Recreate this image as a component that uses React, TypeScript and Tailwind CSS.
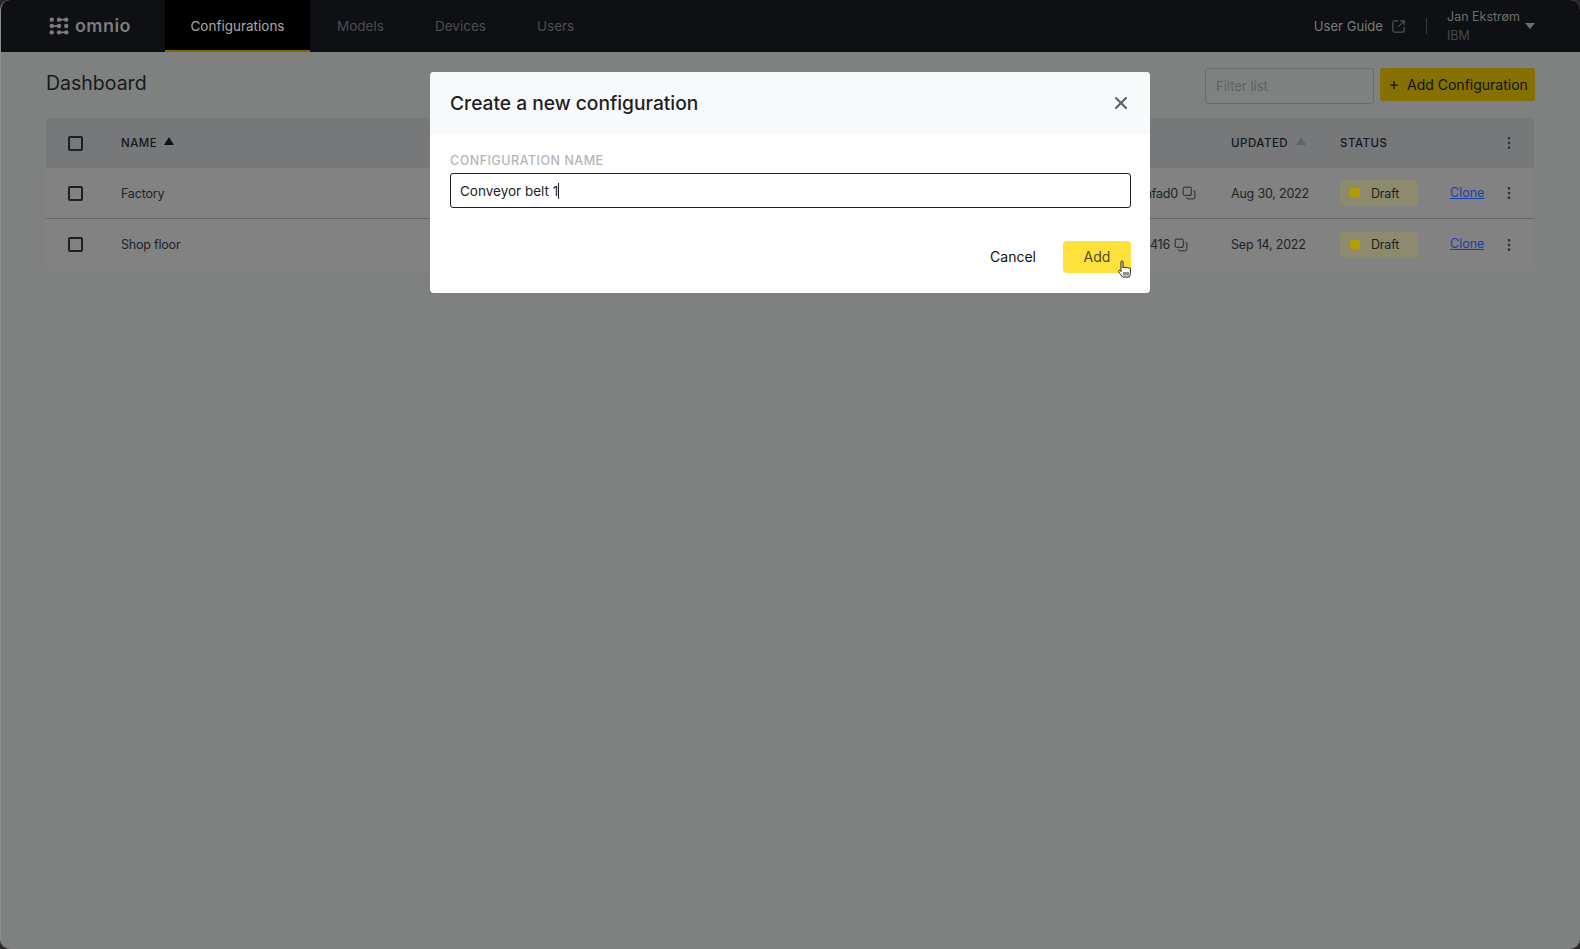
import { Plus, SquareArrowOutUpRight, X, EllipsisVertical, Copy } from 'lucide-react'

const FONT = "font-['Inter','Liberation_Sans',sans-serif]"

function Logo() {
  const ys = [4, 11, 18]
  return (
    <svg width="20" height="20" viewBox="0 0 22 22" fill="#7c7c7c">
      {ys.map((y) => (
        <g key={y}>
          <circle cx="3" cy={y} r="2.4" />
          <circle cx="11" cy={y} r="2.4" />
          <circle cx="19" cy={y} r="2.4" />
          <rect x={y === 11 ? 3 : 11} y={y - 1} width="8" height="2" />
        </g>
      ))}
    </svg>
  )
}

function Caret({ dim }: { dim?: boolean }) {
  return <span className={`inline-block w-0 h-0 border-x-[5px] border-x-transparent border-b-[8px] ${dim ? 'border-b-[#606266]' : 'border-b-[#10121a]'}`}></span>
}

function Checkbox() {
  return <span className="block w-[15px] h-[15px] rounded-[2px] border-2 border-[#1d1f24]"></span>
}

function Row({ name, hash, hashPad, textPad, date, last }: { name: string; hash: string; hashPad: string; textPad: string; date: string; last?: boolean }) {
  return (
    <div className={`flex items-center h-[51px] bg-[#828282] text-[12.5px] tracking-[-0.2px] text-[#202226] ${last ? '' : 'border-b border-[#646566]'}`}>
      <div className="w-[75px] pl-[22px]"><Checkbox /></div>
      <div className={`w-[300px] ${textPad}`}>{name}</div>
      <div className={`flex-1 flex items-center justify-end gap-1 ${hashPad}`}>
        <span className={textPad}>{hash}</span>
        <Copy className="w-[14px] h-[14px] -scale-100 text-[#222428]" strokeWidth={1.6} />
      </div>
      <div className={`w-[109px] ${textPad}`}>{date}</div>
      <div className="w-[110px]">
        <span className="flex items-center w-[78px] h-[26px] pl-[10px] gap-[11px] rounded-[4px] bg-[#8d8a6d] text-[#1d1f24]">
          <span className="w-[10px] h-[10px] rounded-[2px] bg-[#b39c00]"></span>
          <span className={textPad}>Draft</span>
        </span>
      </div>
      <a className="w-[35px] text-[12.5px] tracking-normal text-[#1d3fa8] underline">Clone</a>
      <div className="w-[49px] flex justify-center pr-[2px]">
        <EllipsisVertical className="w-4 h-4 text-[#2f3135]" strokeWidth={2} />
      </div>
    </div>
  )
}

export default function App() {
  return (
    <div className={`relative h-screen overflow-hidden bg-[#2a2a2a] text-[#1d1f24] ${FONT}`}>
      <div className="h-full rounded-[10px] overflow-hidden bg-[#7e817f] border-l border-[#8c8e8d]">
        {/* top nav */}
        <header className="flex items-center h-[52px] bg-[#0e1014]">
          <div className="flex items-center gap-[6px] w-[164px] pl-[48px]">
            <Logo />
            <span className="text-[18px] font-semibold tracking-[0.4px] text-[#7c7c7c] leading-none pb-[1px]">omnio</span>
          </div>
          <nav className="flex h-full text-[13.5px] text-[#4c4d50]">
            <div className="flex items-center w-[145px] justify-center pt-[2px] bg-black border-b-2 border-[#7f6c00] text-[#a9a9a9]">Configurations</div>
            <div className="flex items-center pl-[27px] pt-[1px] w-[98px]">Models</div>
            <div className="flex items-center pl-[27px] pt-[1px] w-[101px]">Devices</div>
            <div className="flex items-center pl-[28px] pt-[1px]">Users</div>
          </nav>
          <div className="ml-auto flex items-center pr-[45px]">
            <span className="text-[13.1px] pt-[2px] text-[#7a7b7d]">User Guide</span>
            <SquareArrowOutUpRight className="ml-[8px] w-[15px] h-[15px] text-[#66676a]" strokeWidth={1.5} />
            <span className="w-px h-[16px] bg-[#3a3b3e] mx-[20px]"></span>
            <div className="w-[78px] text-[12.5px] leading-[19px] text-[#6d6e71]">
              <div>Jan Ekstrøm</div>
              <div className="text-[#46474a]">IBM</div>
            </div>
            <span className="w-0 h-0 border-x-[5px] border-x-transparent border-t-[6px] border-t-[#6d6e71]"></span>
          </div>
        </header>

        <main className="px-[45px]">
          <div className="flex items-start h-[66px] pt-[16px]">
            <h1 className="text-[19.5px] leading-[30px] text-[#17191d]">Dashboard</h1>
            <div className="ml-auto flex gap-[6px]">
              <div className="flex items-center w-[169px] h-[36px] pl-[10px] pt-[2px] rounded-[3px] border border-[#6b6d6d] text-[13px] text-[#606263]">Filter list</div>
              <button className="flex items-center gap-[7px] w-[155px] h-[33px] pl-[8px] rounded-[3px] bg-[#857000] text-[14px] text-[#0f1013]">
                <Plus className="w-[12px] h-[12px]" strokeWidth={2.5} />
                Add Configuration
              </button>
            </div>
          </div>

          <div className="mr-[1px] rounded-[3px] overflow-hidden">
            <div className="flex items-center h-[50px] bg-[#76787a] text-[11.5px] font-medium tracking-[0.5px] text-[#15171b]">
              <div className="w-[75px] pl-[22px]"><Checkbox /></div>
              <div className="flex items-center gap-[7px]"><span className="pt-[1px]">NAME</span> <span className="pb-[5px] flex"><Caret /></span></div>
              <div className="ml-auto w-[109px] flex items-center gap-[8px]"><span className="pt-[1px]">UPDATED</span> <span className="pb-[5px] flex"><Caret dim /></span></div>
              <div className="w-[145px] pt-[1px]">STATUS</div>
              <div className="w-[49px] flex justify-center pr-[2px]">
                <EllipsisVertical className="w-4 h-4 text-[#2f3135]" strokeWidth={2} />
              </div>
            </div>
            <Row name="Factory" hash="cafad0" hashPad="pr-[35px]" textPad="pt-[2px]" date="Aug 30, 2022" />
            <Row name="Shop floor" hash="416" hashPad="pr-[43px]" textPad="pt-[1px]" date="Sep 14, 2022" last />
          </div>
        </main>
      </div>

      {/* modal */}
      <div className="absolute left-[430px] top-[72px] w-[720px] h-[221px] rounded-[4px] overflow-hidden bg-white">
        <div className="flex items-center justify-between h-[62px] pl-[20px] pr-[19px] bg-[#f8f9fb]">
          <h2 className="text-[19.2px] font-medium text-[#1d1f24]">Create a new configuration</h2>
          <X className="w-5 h-5 -mt-[1px] text-[#5f6165]" strokeWidth={2.5} />
        </div>
        <div className="pl-[20px] pr-[19px] pt-[19px]">
          <label className="block text-[12.5px] leading-[16px] font-medium tracking-[0.5px] text-[#b4b5b7]">CONFIGURATION NAME</label>
          <div className="flex items-center h-[35px] mt-[4px] pl-[9px] rounded-[3px] border border-[#1d1f24] text-[13.5px] text-[#1d1f24]">
            <span className="pt-[1px]">Conveyor belt 1</span><span className="w-px h-[16px] bg-[#1d1f24]"></span>
          </div>
          <div className="flex items-center justify-end gap-[27px] mt-[33px]">
            <span className="text-[14px] text-[#111216] pb-[1px]">Cancel</span>
            <button className="w-[68px] h-[32px] pb-[1px] rounded-[4px] bg-[#ffe13c] text-[14px] text-[#4b4a2e]">Add</button>
          </div>
        </div>
      </div>

      {/* mouse pointer */}
      <svg className="absolute left-[1117px] top-[260px]" width="16" height="19" viewBox="0 0 15 19" fill="white" stroke="#222" strokeWidth="1" strokeLinejoin="round">
        <path d="M3.500 1.800c0-1.200 2-1.200 2 0V8c0-1 1.800-1 1.800 0 0-.9 1.800-.9 1.800.1 0-.8 1.800-.8 1.800.2 0-.7 2-.7 2 .5v4.700c0 1.600-.8 2.400-1.300 3.500H5.200C4 15.800 2.500 14 1.200 11.700c-.6-1.200 1-2 1.700-1l.6.8z" />
        <path d="M6.500 12v3.500M8.500 12v3.500M10.500 12v3.500" fill="none" />
      </svg>
    </div>
  )
}
